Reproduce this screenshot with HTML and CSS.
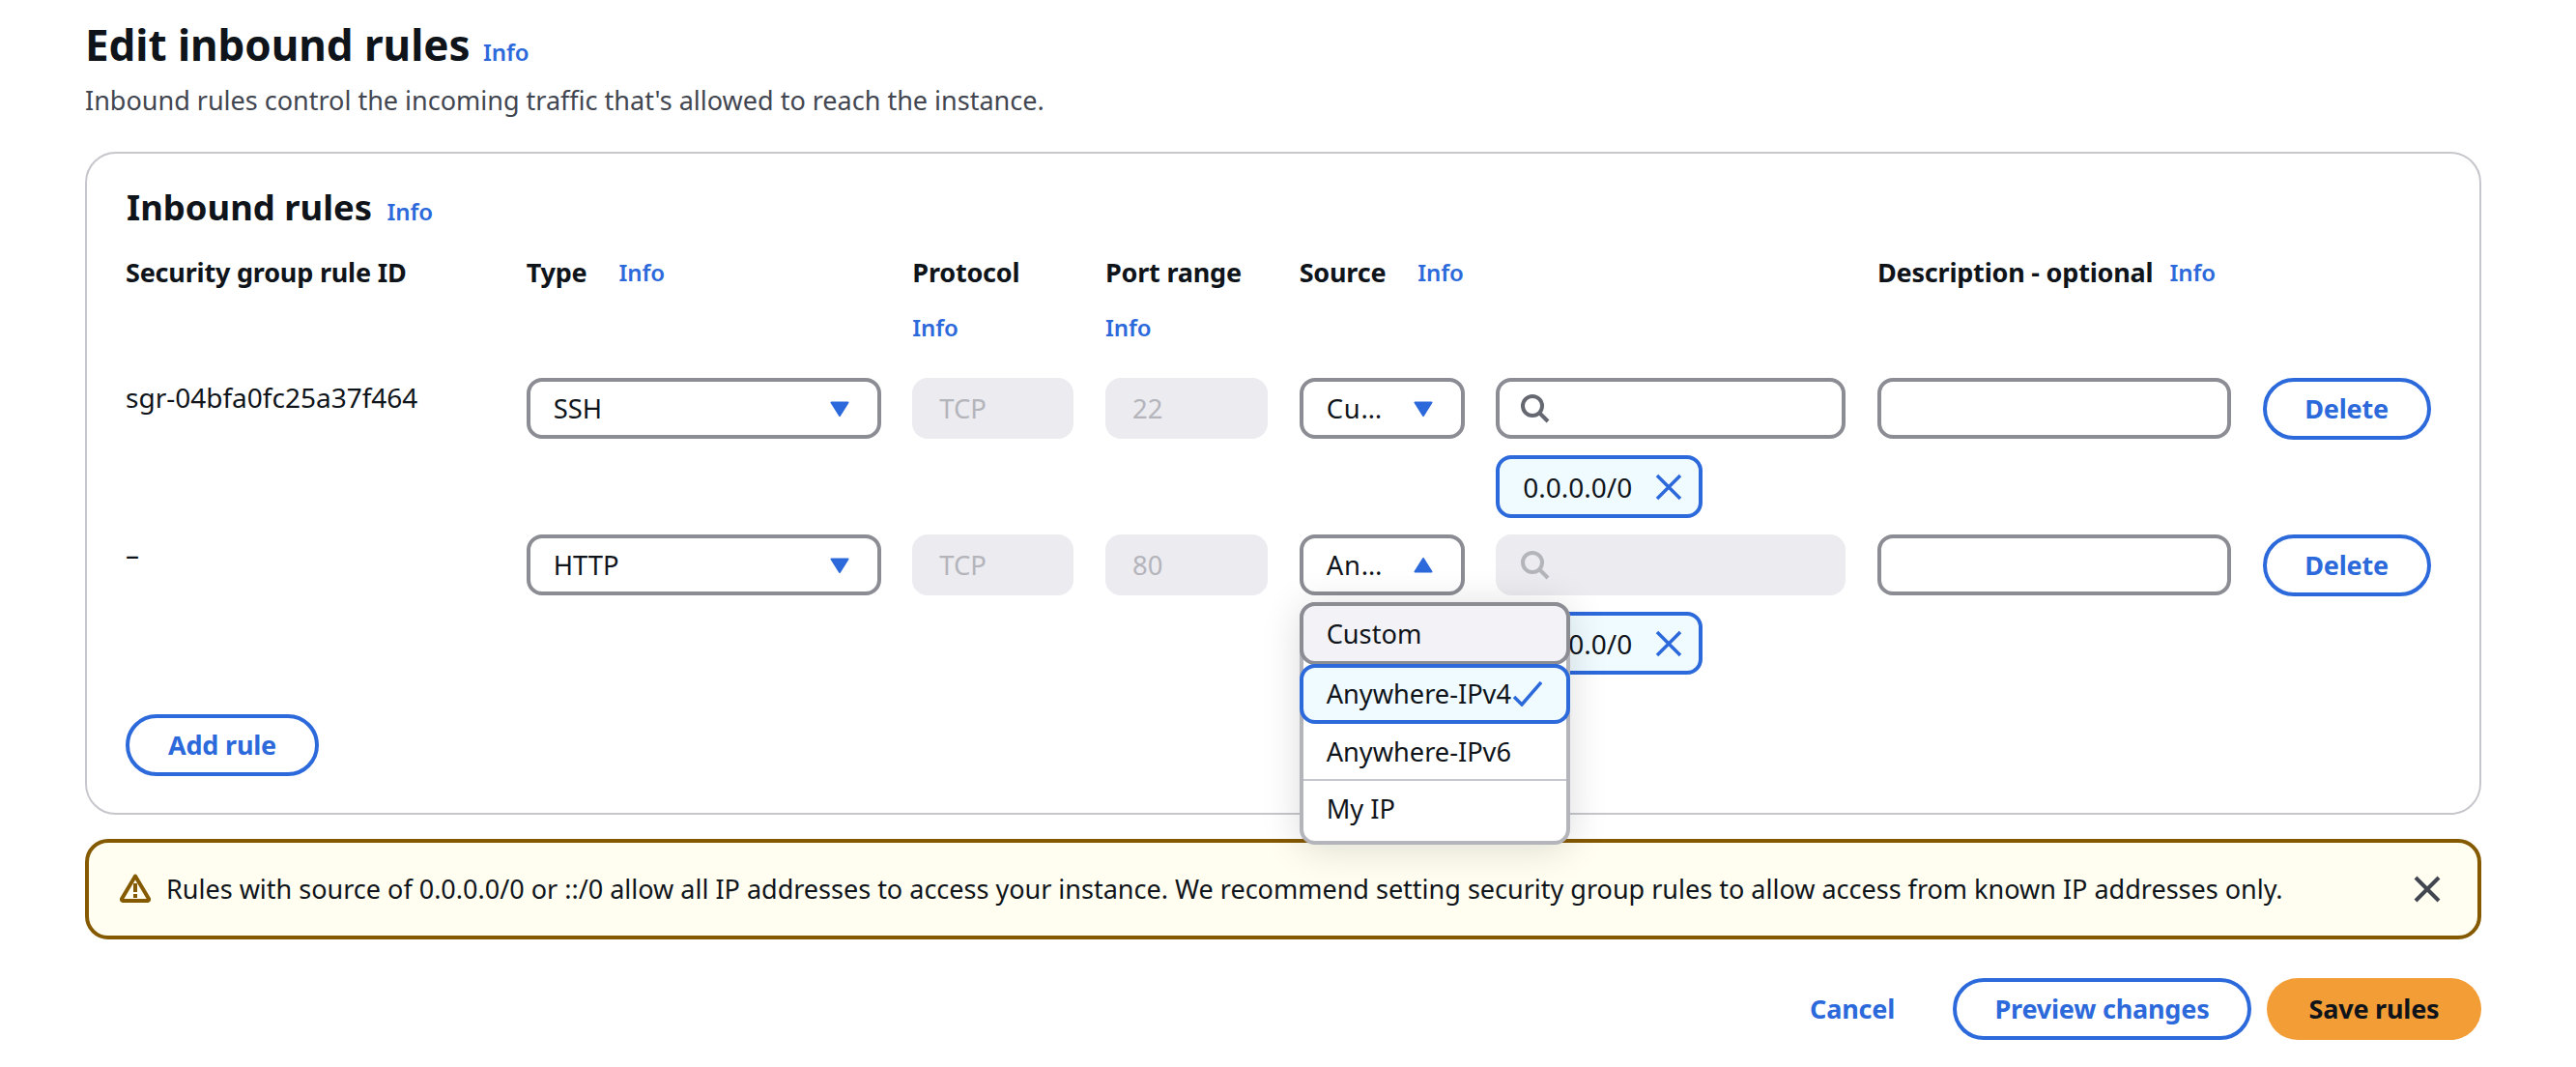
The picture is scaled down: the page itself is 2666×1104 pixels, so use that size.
FILE: index.html
```html
<!DOCTYPE html>
<html lang="en">
<head>
<meta charset="utf-8">
<title>Edit inbound rules</title>
<link rel="stylesheet" href="styles.css">
</head>
<body>
<main class="page">
  <header class="page-head">
    <h1 class="page-title">Edit inbound rules <a class="info info-title">Info</a></h1>
    <p class="page-desc">Inbound rules control the incoming traffic that's allowed to reach the instance.</p>
  </header>

  <section class="panel">
    <h2 class="panel-title">Inbound rules <a class="info info-panel">Info</a></h2>
    <div class="rules">
      <div class="col-head"><span class="label">Security group rule ID</span></div>
      <div class="col-head"><span class="label">Type</span><a class="info">Info</a></div>
      <div class="col-head"><span class="label">Protocol</span><a class="info">Info</a></div>
      <div class="col-head"><span class="label">Port range</span><a class="info">Info</a></div>
      <div class="col-head col-head-nowrap"><span class="label">Source</span><a class="info">Info</a></div>
      <div></div>
      <div class="col-head col-head-tight"><span class="label">Description - optional</span><a class="info">Info</a></div>
      <div></div>

      <div class="rule-id">sgr-04bfa0fc25a37f464</div>
      <div class="control select"><span>SSH</span><svg class="caret" viewBox="0 0 20 16"><path d="M1.5 1.5h17L10 15z"/></svg></div>
      <div class="control disabled">TCP</div>
      <div class="control disabled">22</div>
      <div class="control select"><span class="clipped">Cu…</span><svg class="caret" viewBox="0 0 20 16"><path d="M1.5 1.5h17L10 15z"/></svg></div>
      <div class="source-cell">
        <div class="control search"><svg class="search-icon" viewBox="0 0 30 30"><circle cx="12" cy="12" r="10"/><path d="M19 19l9 9"/></svg></div>
        <div class="token">0.0.0.0/0<svg class="token-x" viewBox="0 0 28 28"><path d="M2 2l24 24M26 2L2 26"/></svg></div>
      </div>
      <div class="control"></div>
      <button class="btn btn-normal btn-delete">Delete</button>

      <div class="rule-id">–</div>
      <div class="control select"><span>HTTP</span><svg class="caret" viewBox="0 0 20 16"><path d="M1.5 1.5h17L10 15z"/></svg></div>
      <div class="control disabled">TCP</div>
      <div class="control disabled">80</div>
      <div class="source-select-cell">
        <div class="control select"><span class="clipped">An…</span><svg class="caret" viewBox="0 0 20 16"><path d="M1.5 14.5h17L10 1z"/></svg></div>
        <ul class="menu">
          <li class="option option-hover">Custom</li>
          <li class="option option-selected">Anywhere-IPv4<svg class="check" viewBox="0 0 30 26"><path d="M1 16l8 8L29 1"/></svg></li>
          <li class="option">Anywhere-IPv6</li>
          <li class="option option-rule">My IP</li>
        </ul>
      </div>
      <div class="source-cell">
        <div class="control search disabled"><svg class="search-icon search-icon-off" viewBox="0 0 30 30"><circle cx="12" cy="12" r="10"/><path d="M19 19l9 9"/></svg></div>
        <div class="token">0.0.0.0/0<svg class="token-x" viewBox="0 0 28 28"><path d="M2 2l24 24M26 2L2 26"/></svg></div>
      </div>
      <div class="control"></div>
      <button class="btn btn-normal btn-delete">Delete</button>
    </div>
    <button class="btn btn-normal btn-add">Add rule</button>
  </section>

  <div class="alert">
    <svg class="alert-icon" viewBox="0 0 32 30"><path class="alert-tri" d="M16 2.5L30 26a1.5 1.5 0 0 1-1.3 2H3.3A1.5 1.5 0 0 1 2 26z"/><path class="alert-mark" d="M16 10v9M16 21v4"/></svg>
    <p class="alert-text">Rules with source of 0.0.0.0/0 or ::/0 allow all IP addresses to access your instance. We recommend setting security group rules to allow access from known IP addresses only.</p>
    <svg class="alert-close" viewBox="0 0 28 28"><path d="M2 2l24 24M26 2L2 26"/></svg>
  </div>

  <footer class="actions">
    <a class="link-btn">Cancel</a>
    <button class="btn btn-normal btn-preview">Preview changes</button>
    <button class="btn btn-primary">Save rules</button>
  </footer>
</main>
</body>
</html>
```

FILE: styles.css
```css
* { box-sizing: border-box; }
html, body { margin: 0; padding: 0; background: #fff; }
body {
  font-family: "Noto Sans", "Liberation Sans", sans-serif;
  font-size: 28px;
  line-height: 40px;
  color: #0f141a;
}
.page { padding: 22px 98px 0 88px; width: 2666px; }
.page-head { height: 135px; }
.page-title { margin: 0; font-size: 44px; line-height: 48px; font-weight: 700; letter-spacing: -0.05px; }
.page-desc { margin: 14px 0 0; color: #424650; font-size: 27px; line-height: 40px; height: 40px; }
.info { color: #2c69db; font-size: 24px; font-weight: 600; line-height: 32px; letter-spacing: -0.1px; }
.info-title { margin-left: 2px; }
.info-panel { margin-left: 6px; }
.panel {
  border: 2px solid #c6c6cd;
  border-radius: 32px;
  padding: 35px 42px 40px 40px;
  height: 686px;
}
.panel-title { margin: 0 0 0 1px; font-size: 36.4px; line-height: 40px; font-weight: 700; }
.rules {
  display: grid;
  grid-template-columns: 382px 367px 167px 168px 171px 362px 366px 174px;
  column-gap: 32.67px;
  row-gap: 17px;
  margin-top: 27px;
}
.col-head { display: flex; flex-wrap: wrap; column-gap: 33px; row-gap: 21px; align-items: center; height: 112px; align-content: flex-start; }
.col-head-tight { column-gap: 17px; }
.col-head-nowrap { flex-wrap: nowrap; white-space: nowrap; height: 40px; }
.label { font-weight: 700; font-size: 27px; line-height: 40px; letter-spacing: -0.2px; }
.rule-id { font-size: 28px; line-height: 40px; }
.control {
  height: 63px;
  border: 4px solid #8c8c94;
  border-radius: 16px;
  background: #fff;
  padding: 0 24px;
  display: flex;
  align-items: center;
  justify-content: space-between;
  font-size: 27.4px;
}
.clipped { letter-spacing: 0.8px; }
.disabled { background: #ebebf0; border-color: #ebebf0; color: #b4b4bb; }
.caret { width: 20px; height: 16px; fill: #2c69db; stroke: #2c69db; stroke-width: 2; stroke-linejoin: round; margin-right: 5px; flex: none; }
.source-cell { display: flex; flex-direction: column; gap: 17px; align-items: flex-start; }
.source-cell .control { width: 100%; }
.source-select-cell { position: relative; }
.search { justify-content: flex-start; padding-left: 22px; }
.search-icon { width: 30px; height: 30px; fill: none; stroke: #656871; stroke-width: 4; }
.search-icon-off { stroke: #b4b4bb; }
.token {
  height: 65px;
  width: 214px;
  border: 4px solid #2c69db;
  border-radius: 16px;
  background: #f0fbff;
  padding: 0 17px 0 24px;
  display: flex;
  align-items: center;
  justify-content: space-between;
  font-size: 28px;
}
.token-x { width: 28px; height: 28px; fill: none; stroke: #2c69db; stroke-width: 3.5; }
.btn {
  height: 64px;
  border-radius: 32px;
  font-family: inherit;
  font-size: 27px;
  font-weight: 700;
  line-height: 40px;
  letter-spacing: -0.2px;
  padding: 0;
  background: #fff;
}
.btn-normal { border: 4px solid #2c69db; color: #2c69db; }
.btn-delete { width: 174px; }
.btn-add { width: 200px; margin-top: 41px; }
.btn-preview { width: 309px; margin-right: 16px; }
.btn-primary { width: 222px; border: 0; background: #f39d37; color: #0f141a; }
.menu {
  position: absolute;
  z-index: 2;
  top: 70px;
  left: 0;
  width: 280px;
  height: 251px;
  margin: 0;
  padding: 0;
  list-style: none;
  background: #fff;
  border: 4px solid #b4b4bb;
  border-radius: 16px;
  box-shadow: 0 4px 40px rgba(0, 7, 22, 0.14);
}
.option { height: 57px; display: flex; align-items: center; font-size: 27.2px; margin: 0 -4px; padding-left: 28px; }
.option-hover { height: 65px; margin-top: -4px; background: #f3f3f7; border: 4px solid #8c8c94; border-radius: 16px; padding-left: 24px; }
.option-selected { height: 62px; margin-top: -1px; background: #f0fbff; border: 4px solid #2c69db; border-radius: 16px; padding-left: 24px; }
.option-rule { border-top: 2px solid #c6c6cd; margin: 0; padding: 0 0 4px 24px; height: 64px; }
.check { width: 30px; height: 26px; fill: none; stroke: #2c69db; stroke-width: 3.5; flex: none; margin-left: 2px; }
.alert {
  margin-top: 25px;
  height: 104px;
  border: 4px solid #855900;
  border-radius: 24px;
  background: #fffef0;
  display: flex;
  align-items: center;
  padding: 0 38px 0 32px;
}
.alert-icon { width: 32px; height: 30px; flex: none; margin-right: 16px; margin-top: -2px; fill: none; stroke: #855900; stroke-width: 4; stroke-linejoin: round; }
.alert-text { margin: 0; flex: 1; font-size: 27px; line-height: 40px; }
.alert-close { width: 28px; height: 28px; fill: none; stroke: #424650; stroke-width: 4; flex: none; }
.actions { margin-top: 40px; display: flex; justify-content: flex-end; align-items: center; }
.link-btn { color: #2c69db; font-weight: 700; font-size: 27px; letter-spacing: -0.2px; margin-right: 60px; }
```
